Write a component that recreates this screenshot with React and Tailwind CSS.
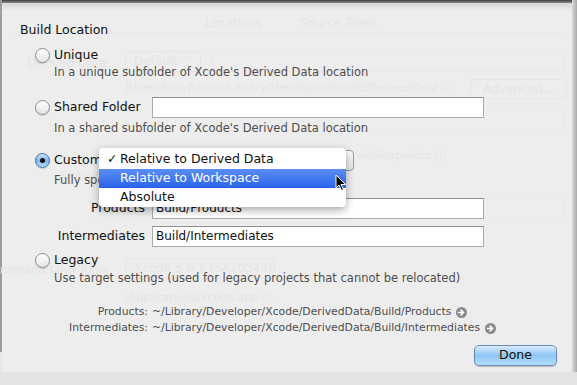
import React from "react";

const font = { fontFamily: '"DejaVu Sans", "Liberation Sans", sans-serif' };

const Radio = ({ checked }) =>
  checked ? (
    <span className="w-[15px] h-[15px] rounded-full border border-[#3e6fa8] bg-gradient-to-b from-[#cfe4fb] via-[#7fb4ee] to-[#b9dcfb] flex items-center justify-center shadow-[0_1px_1px_rgba(0,0,0,0.15)] shrink-0">
      <span className="w-[5px] h-[5px] rounded-full bg-[#111]" />
    </span>
  ) : (
    <span className="w-[15px] h-[15px] rounded-full border border-[#8c8c8c] bg-gradient-to-b from-[#ffffff] to-[#e4e4e4] shadow-[0_1px_1px_rgba(0,0,0,0.12)] shrink-0" />
  );

const Field = ({ value }) => (
  <div className="w-[332px] h-[21px] bg-white border border-[#ababab] border-t-[#8f8f8f] flex items-center px-[3px] text-[12px] text-[#111]">
    {value}
  </div>
);

const GoIcon = () => (
  <svg width="11" height="11" viewBox="0 0 11 11" className="ml-[5px] shrink-0">
    <circle cx="5.5" cy="5.5" r="5.5" fill="#8a8a8a" />
    <path d="M2.5 5.5h4M5 3l2.6 2.5L5 8" stroke="#fff" strokeWidth="1.6" fill="none" strokeLinecap="round" strokeLinejoin="round" />
  </svg>
);

const Ghost = () => (
  <div className="absolute inset-0 text-[12px] text-[#e4e4e4] pointer-events-none">
    <div className="absolute left-[203px] top-[14px]">Locations</div>
    <div className="absolute left-[298px] top-[14px]">Source Trees</div>
    <div className="absolute left-[10px] right-[10px] top-[33px] h-px bg-[#e7e7e7]" />
    <div className="absolute left-[25px] top-[54px]">Derived Data:</div>
    <div className="absolute left-[123px] top-[51px] w-[76px] h-[21px] border border-[#e6e6e6] rounded-[4px] pl-[8px] leading-[19px]">Default ⌃</div>
    <div className="absolute left-[123px] top-[80px] text-[11px]">/Users/tonyfrancis/Library/Developer/Xcode/DerivedData ⓘ</div>
    <div className="absolute left-[210px] top-[51px] right-[8px] h-[21px] border border-[#e8e8e8]" />
    <div className="absolute left-[468px] top-[79px] w-[97px] h-[20px] border border-[#e6e6e6] rounded-[4px] text-center leading-[18px]">Advanced...</div>
    <div className="absolute left-[210px] top-[110px] right-[8px] h-[21px] border border-[#e8e8e8]" />
    <div className="absolute left-[355px] top-[148px] text-[11px]">de/Snapshots ⓘ</div>
    <div className="absolute left-[56px] top-[167px]">Archives</div>
    <div className="absolute left-[480px] top-[198px] right-[8px] h-[21px] border border-[#e8e8e8]" />
    <div className="absolute left-[-2px] top-[261px]">mmand Line Tools:</div>
    <div className="absolute left-[123px] top-[258px] w-[150px] h-[21px] border border-[#e6e6e6] rounded-[4px] pl-[8px] leading-[19px]">Xcode 5.0.1 (5A2034a)</div>
    <div className="absolute left-[123px] top-[290px] text-[11px]">/Applications/Xcode.app ⓘ</div>
  </div>
);

export default function App() {
  return (
    <div className="w-[577px] h-[385px] relative overflow-hidden bg-[#e6e6e6]" style={font}>
      <div className="absolute left-0 top-0 bottom-[33px] w-[2px] bg-[#9d9d9d]" />
      <div className="absolute right-0 top-0 bottom-[13px] w-[5px] bg-gradient-to-r from-[#dadada] to-[#a9a9a9]" />
      <div className="absolute left-[2px] right-[5px] top-0 h-[372px] bg-[#ededed]">
        <Ghost />
        <div className="relative flex flex-col">
          <div className="h-[3px] bg-gradient-to-b from-[#3f3f3f] to-[#8d8d8d]" />
          <div className="h-[8px] bg-gradient-to-b from-[#d6d6d6] to-[#ededed]" />
          <div className="pl-[18px] flex flex-col">
            <div className="mt-[10px] h-[18px] flex items-center text-[12.5px] text-[#111]">Build Location</div>

            <div className="mt-[7px] h-[18px] flex items-center pl-[15px] text-[12.5px] text-[#111]">
              <Radio />
              <span className="ml-[4px]">Unique</span>
            </div>
            <div className="h-[18px] flex items-center pl-[34px] text-[11.5px] text-[#4e4e4e]">
              In a unique subfolder of Xcode's Derived Data location
            </div>

            <div className="mt-[14px] h-[22px] flex items-center pl-[15px] text-[12.5px] text-[#111]">
              <Radio />
              <span className="ml-[4px] w-[98px]">Shared Folder</span>
              <Field value="" />
            </div>
            <div className="mt-[2px] h-[18px] flex items-center pl-[34px] text-[11.5px] text-[#4e4e4e]">
              In a shared subfolder of Xcode's Derived Data location
            </div>

            <div className="mt-[13px] h-[18px] flex items-center pl-[15px] text-[12.5px] text-[#111]">
              <Radio checked />
              <span className="ml-[4px]">Custom</span>
              <div className="ml-[4px] w-[248px] h-[21px] rounded-[4px] border border-[#9a9a9a] bg-gradient-to-b from-white to-[#e6e6e6]" />
            </div>
            <div className="mt-[3px] h-[18px] flex items-center pl-[34px] text-[11.5px] text-[#4e4e4e]">
              Fully specify paths for Products and Intermediates
            </div>

            <div className="mt-[7px] h-[22px] flex items-center text-[12.5px] text-[#111]">
              <span className="w-[132px] text-right pr-[7px]">Products</span>
              <Field value="Build/Products" />
            </div>
            <div className="mt-[6px] h-[22px] flex items-center text-[12.5px] text-[#111]">
              <span className="w-[132px] text-right pr-[7px]">Intermediates</span>
              <Field value="Build/Intermediates" />
            </div>

            <div className="mt-[4px] h-[18px] flex items-center pl-[15px] text-[12.5px] text-[#111]">
              <Radio />
              <span className="ml-[4px]">Legacy</span>
            </div>
            <div className="mt-[1px] h-[18px] flex items-center pl-[34px] text-[11.5px] text-[#4e4e4e]">
              Use target settings (used for legacy projects that cannot be relocated)
            </div>

            <div className="mt-[16px] flex flex-col text-[10.8px] text-[#4e4e4e]">
              <div className="h-[16px] flex items-center">
                <span className="w-[132px] text-right pr-[4px]">Products:</span>
                <span>~/Library/Developer/Xcode/DerivedData/Build/Products</span>
                <GoIcon />
              </div>
              <div className="h-[16px] flex items-center">
                <span className="w-[132px] text-right pr-[4px]">Intermediates:</span>
                <span>~/Library/Developer/Xcode/DerivedData/Build/Intermediates</span>
                <GoIcon />
              </div>
            </div>

            <div className="mt-[9px] flex justify-end pr-[15px]">
              <button className="w-[83px] h-[21px] rounded-[5px] border border-[#6a8db8] bg-gradient-to-b from-[#d8ecfd] via-[#8fc6f3] to-[#b5defb] text-[12.5px] text-[#111] shadow-[0_1px_1px_rgba(0,0,0,0.2)]">
                Done
              </button>
            </div>
          </div>
        </div>

        {/* popup menu */}
        <div className="absolute left-[97px] top-[148px] w-[247px] h-[59px] bg-white/[0.97] rounded-[4px] shadow-[0_3px_8px_rgba(0,0,0,0.35)] py-[2px] text-[12.5px] text-[#111]">
          <div className="h-[19px] flex items-center pl-[8px]">
            <span className="w-[13px]">✓</span>
            <span>Relative to Derived Data</span>
          </div>
          <div className="h-[19px] flex items-center pl-[21px] text-white bg-gradient-to-b from-[#5a8ef4] to-[#2a63e8]">
            Relative to Workspace
          </div>
          <div className="h-[18px] flex items-center pl-[21px]">Absolute</div>
        </div>

        <svg className="absolute left-[333px] top-[174px]" width="12" height="18" viewBox="0 0 12 18">
          <path d="M1 1 L1 14 L4 11 L6.5 16.5 L8.5 15.5 L6 10.5 L10.5 10.5 Z" fill="#000" stroke="#fff" strokeWidth="1" strokeLinejoin="round" />
        </svg>
      </div>
      <div className="absolute left-0 right-0 bottom-0 h-[13px] bg-[#e3e3e3]" />
    </div>
  );
}
